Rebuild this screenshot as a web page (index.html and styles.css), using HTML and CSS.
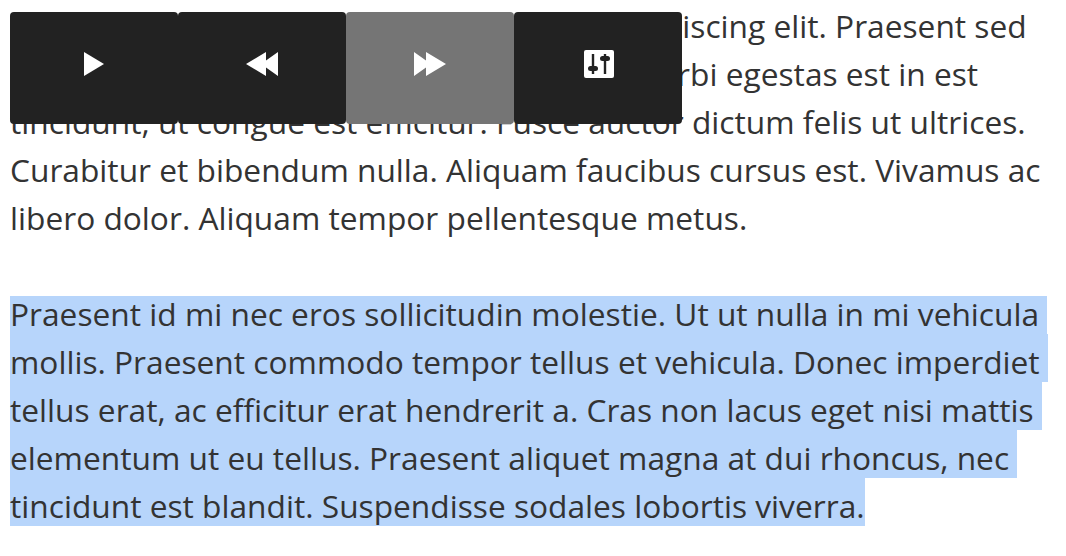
FILE: index.html
```html
<!DOCTYPE html>
<html>
<head>
  <title>Audio Player</title>
  <link rel="stylesheet" href="styles.css">
</head>
<body>
  <div class="controls">
    <button class="control">
      <svg width="20" height="24" viewBox="0 0 20 24"><path d="M0 0L20 12L0 24Z" fill="#fff"/></svg>
    </button>
    <button class="control">
      <svg width="32" height="24" viewBox="0 0 32 24"><path d="M0 12L20 0V8.500L32 0V24L20 15.500V24Z" fill="#fff"/></svg>
    </button>
    <button class="control control-active">
      <svg width="32" height="24" viewBox="0 0 32 24"><path d="M32 12L12 0V8.500L0 0V24L12 15.500V24Z" fill="#fff"/></svg>
    </button>
    <button class="control">
      <svg class="icon-settings" width="30" height="28" viewBox="0 0 30 28">
        <rect width="30" height="28" rx="2" fill="#fff"/>
        <path d="M9 4V24M21 4V24" stroke="#222" stroke-width="2.400" fill="none"/>
        <rect x="4" y="16" width="10" height="5" rx="2.500" fill="#222"/>
        <rect x="16" y="6" width="10" height="5" rx="2.500" fill="#222"/>
      </svg>
    </button>
  </div>

  <div class="text">
    <div class="line">Lorem ipsum dolor sit amet, consectetur adipiscing elit. Praesent sed</div>
    <div class="line">pellentesque nunc, vel lacus. Nam vel nisi morbi egestas est in est</div>
    <div class="line">tincidunt, ut congue est efficitur. Fusce auctor dictum felis ut ultrices.</div>
    <div class="line">Curabitur et bibendum nulla. Aliquam faucibus cursus est. Vivamus ac</div>
    <div class="line">libero dolor. Aliquam tempor pellentesque metus.</div>
  </div>

  <div class="text">
    <div class="line selected">Praesent id mi nec eros sollicitudin molestie. Ut ut nulla in mi vehicula </div>
    <div class="line selected">mollis. Praesent commodo tempor tellus et vehicula. Donec imperdiet </div>
    <div class="line selected">tellus erat, ac efficitur erat hendrerit a. Cras non lacus eget nisi mattis </div>
    <div class="line selected">elementum ut eu tellus. Praesent aliquet magna at dui rhoncus, nec </div>
    <div class="line selected">tincidunt est blandit. Suspendisse sodales lobortis viverra.</div>
  </div>
</body>
</html>
```

FILE: styles.css
```css
body {
  margin: 0;
  padding: 8px 10px 0;
  background: #fff;
  color: #333;
  font-family: "Open Sans", sans-serif;
  font-size: 31.7px;
  line-height: 36px;
}

.text + .text {
  margin-top: 48px;
}

.line {
  width: fit-content;
  padding-bottom: 12px;
  white-space: pre;
}

.selected {
  padding-top: 10px;
  padding-bottom: 2px;
  background: #b7d5fb;
}

.selected:first-child {
  padding-top: 0;
}

.controls {
  position: absolute;
  top: 12px;
  left: 10px;
  display: flex;
}

.control {
  display: flex;
  align-items: center;
  justify-content: center;
  width: 168px;
  height: 112px;
  padding: 0 0 8px;
  border: none;
  border-radius: 4px;
  background: #222;
}

.control-active {
  background: #757575;
}

.icon-settings {
  margin-left: 2px;
}
```
